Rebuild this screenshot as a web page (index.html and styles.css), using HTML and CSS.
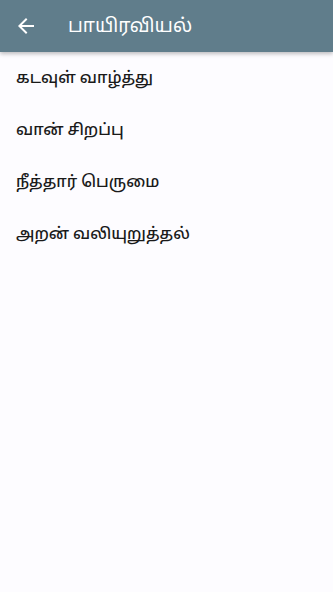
FILE: index.html
```html
<!DOCTYPE html>
<html lang="ta">
<head>
  <meta charset="UTF-8" />
  <meta name="viewport" content="width=device-width, initial-scale=1.0"/>
  <title>பாயிரவியல்</title>
  <link rel="stylesheet" href="styles.css">
</head>
<body>

<div class="toolbar">
  <button class="back" aria-label="back">
    <svg width="24" height="24" viewBox="0 0 24 24">
      <path d="M20 11H7.83l5.59-5.59L12 4l-8 8 8 8 1.41-1.41L7.83 13H20v-2z" fill="#fff"/>
    </svg>
  </button>
  <div class="title">பாயிரவியல்</div>
</div>

<ul class="list">
  <li>கடவுள் வாழ்த்து</li>
  <li>வான் சிறப்பு</li>
  <li>நீத்தார் பெருமை</li>
  <li>அறன் வலியுறுத்தல்</li>
</ul>

</body>
</html>
```

FILE: styles.css
```css
body {
  margin: 0;
  background-color: #fdfcff;
  font-family: Roboto, "Noto Sans Tamil", "Noto Sans", sans-serif;
  height: 100vh;
}

.toolbar {
  height: 52px;
  background-color: #607d8b;
  display: flex;
  align-items: center;
  box-shadow: 0 2px 4px rgba(0, 0, 0, 0.25);
}

.back {
  background: none;
  border: none;
  padding: 0;
  width: 52px;
  height: 52px;
  display: flex;
  align-items: center;
  justify-content: center;
}

.title {
  color: #fff;
  font-size: 19px;
  margin-left: 16px;
}

.list {
  list-style: none;
  margin: 0;
  padding: 0;
}

.list li {
  height: 52px;
  line-height: 52px;
  padding-left: 16px;
  font-size: 16px;
  font-weight: 500;
  color: #1a1a1a;
}
```
